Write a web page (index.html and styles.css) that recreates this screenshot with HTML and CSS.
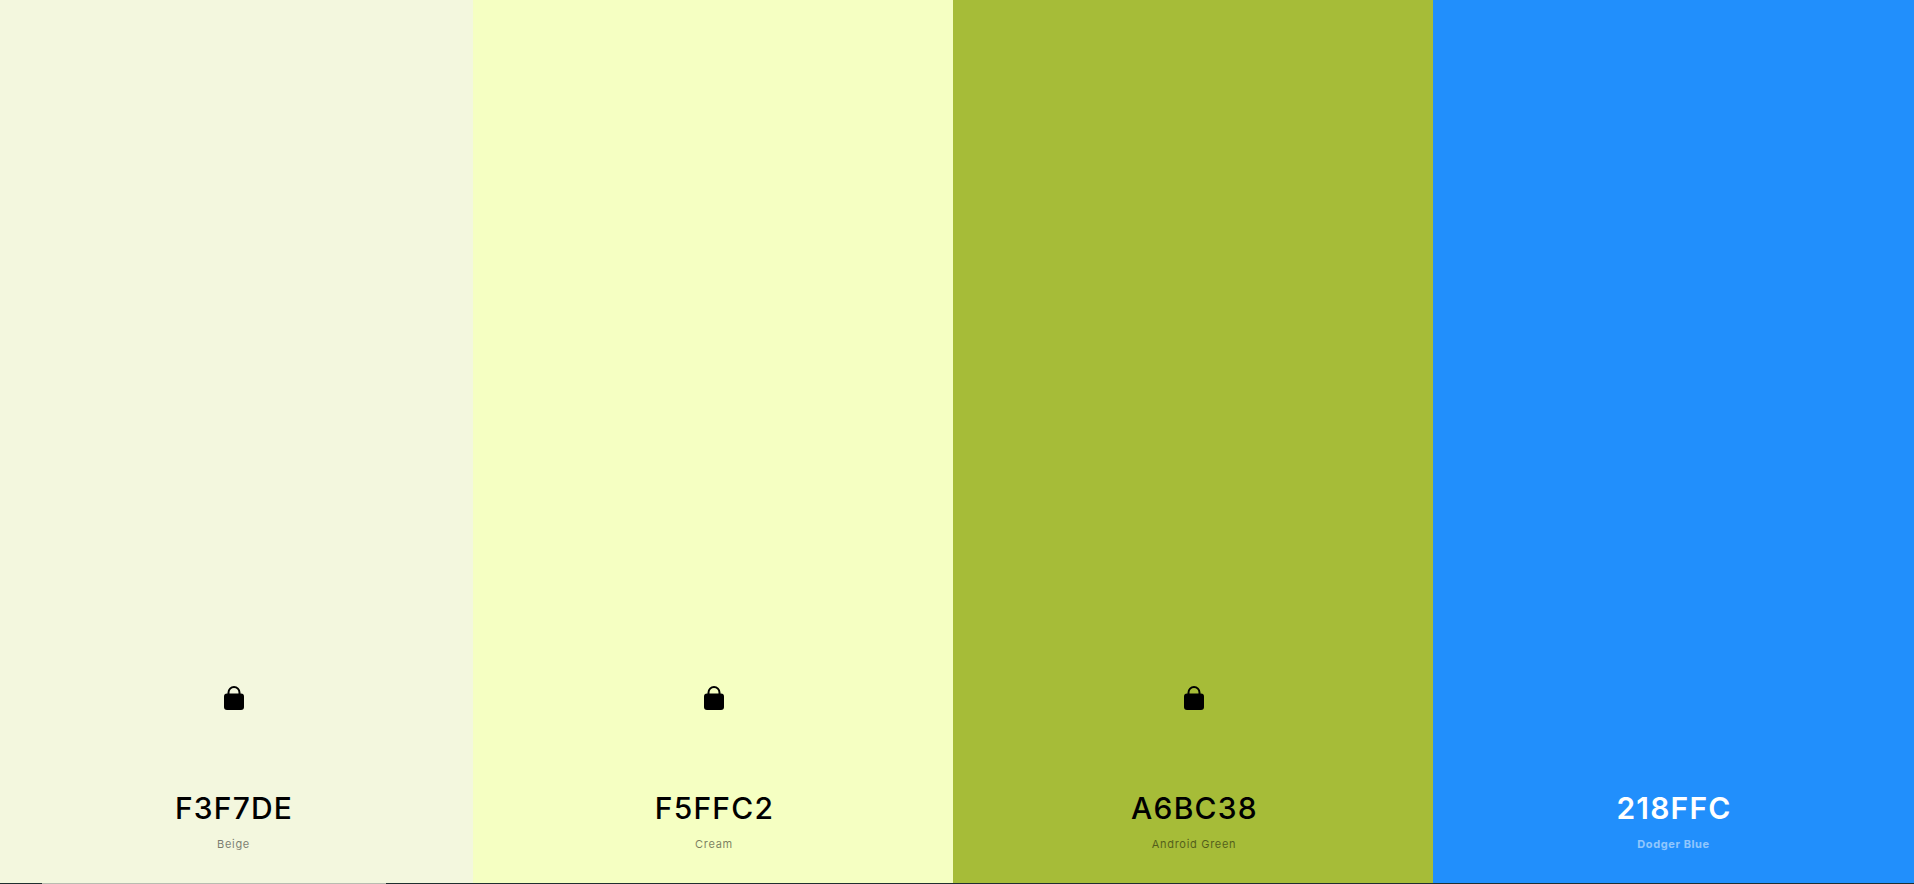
FILE: index.html
```html
<!DOCTYPE html>
<html lang="en">
<head>
  <meta charset="UTF-8" />
  <title>Palette</title>
  <link rel="stylesheet" href="styles.css">
</head>
<body>
  <div class="palette">
    <div class="swatch swatch-first beige">
      <svg class="lock" viewBox="0 0 20 24"><path d="M4.5 10V6.5a5.5 5.5 0 0 1 11 0V10" fill="none" stroke="#000" stroke-width="2"/><rect y="7.5" width="20" height="16.5" rx="3"/></svg>
      <div class="hex">F3F7DE</div>
      <div class="name">Beige</div>
    </div>
    <div class="swatch swatch-mid cream">
      <svg class="lock" viewBox="0 0 20 24"><path d="M4.5 10V6.5a5.5 5.5 0 0 1 11 0V10" fill="none" stroke="#000" stroke-width="2"/><rect y="7.5" width="20" height="16.5" rx="3"/></svg>
      <div class="hex">F5FFC2</div>
      <div class="name">Cream</div>
    </div>
    <div class="swatch swatch-mid green">
      <svg class="lock" viewBox="0 0 20 24"><path d="M4.5 10V6.5a5.5 5.5 0 0 1 11 0V10" fill="none" stroke="#000" stroke-width="2"/><rect y="7.5" width="20" height="16.5" rx="3"/></svg>
      <div class="hex">A6BC38</div>
      <div class="name">Android Green</div>
    </div>
    <div class="swatch blue">
      <div class="hex">218FFC</div>
      <div class="name">Dodger Blue</div>
    </div>
  </div>
  <div class="scrollbar"><div class="thumb"></div></div>
</body>
</html>
```

FILE: styles.css
```css
html, body {
  height: 100%;
}

body {
  margin: 0;
  display: flex;
  flex-direction: column;
  overflow: hidden;
  font-family: Inter, 'Noto Sans', sans-serif;
  color: #000;
}

.palette {
  flex: 1;
  display: grid;
  grid-template-columns: 473px 480px 480px 481px;
}

.swatch {
  display: flex;
  flex-direction: column;
  align-items: center;
  justify-content: flex-end;
  padding-bottom: 32px;
}

.swatch-first {
  padding-right: 6px;
}

.swatch-mid {
  padding-left: 2px;
}

.beige { background: #f3f7de; }
.cream { background: #f5ffc2; }
.green { background: #a6bc38; }
.blue { background: #218ffc; color: #fff; }

.lock {
  width: 20px;
  height: 24px;
  margin-bottom: 81px;
}

.hex {
  font-size: 30px;
  font-weight: 500;
  line-height: 34px;
  letter-spacing: 1.2px;
  padding-left: 1px;
}

.blue .hex {
  font-weight: 600;
}

.name {
  margin-top: 12px;
  font-size: 11px;
  font-weight: 400;
  line-height: 14px;
  letter-spacing: 0.7px;
  opacity: 0.5;
}

.blue .name {
  font-weight: 700;
  letter-spacing: 0.6px;
}

.scrollbar {
  height: 1px;
  background: #1f2f2f;
}

.thumb {
  width: 344px;
  height: 1px;
  margin-left: 42px;
  background: #b8bcb0;
}
```
